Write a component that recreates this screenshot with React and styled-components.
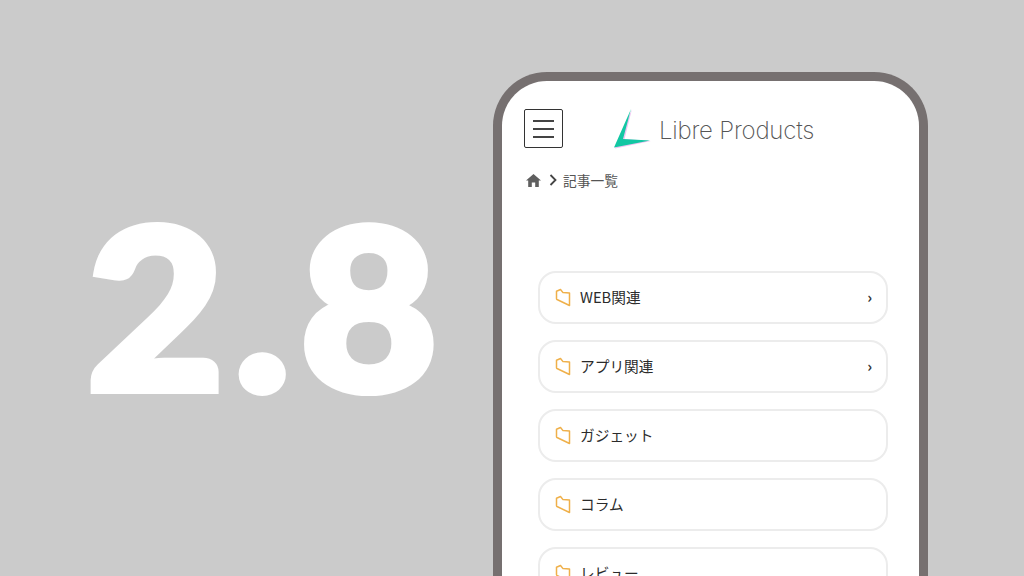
import React from "react";
import styled, { createGlobalStyle } from "styled-components";

const categories = [
  { name: "WEB関連", more: true },
  { name: "アプリ関連", more: true },
  { name: "ガジェット" },
  { name: "コラム" },
  { name: "レビュー" },
];

function FolderIcon() {
  return (
    <svg width="16" height="19" viewBox="0 0 16 19" fill="none" stroke="#efb04a" strokeWidth="1.5" strokeLinejoin="round">
      <path d="M1.5 3.2 L5.5 1.5 L8 4.6 L14.5 5 L14.5 17.5 L2 11.5 Q1.5 11.2 1.5 10.5 Z" />
    </svg>
  );
}

function HomeIcon() {
  return (
    <svg width="15" height="15" viewBox="0 0 15 15" fill="#5f5f5f">
      <path d="M7.5 1 L15 7.5 L12.8 7.5 L12.8 14 L9.2 14 L9.2 9.5 L5.8 9.5 L5.8 14 L2.2 14 L2.2 7.5 L0 7.5 Z" />
    </svg>
  );
}

function LogoMark() {
  return (
    <svg width="38" height="41" viewBox="0 0 38 41">
      <defs>
        <linearGradient id="markFade" x1="0" y1="1" x2="1" y2="0">
          <stop offset="0.55" stopColor="#12c7a3" />
          <stop offset="1" stopColor="#7fe3cf" />
        </linearGradient>
      </defs>
      <path d="M19 1 L11.5 31 L38 33 L2 40.5 Z" fill="#eec3f2" />
      <path d="M18 1 L10 31 L37 32.5 L1 39.5 Z" fill="url(#markFade)" />
    </svg>
  );
}

function App() {
  return (
    <>
      <GlobalStyle />
      <Stage>
        <VersionPane>
          <Version>2.8</Version>
        </VersionPane>
        <Phone>
          <Header>
            <MenuButton>
              <MenuLine />
              <MenuLine />
              <MenuLine />
            </MenuButton>
            <Logo>
              <LogoMark />
              <LogoText>Libre Products</LogoText>
            </Logo>
          </Header>
          <Breadcrumb>
            <HomeIcon />
            <Chevron width="8" height="12" viewBox="0 0 8 12" fill="none" stroke="#444" strokeWidth="1.8">
              <path d="M1.5 1 L6.5 6 L1.5 11" />
            </Chevron>
            <span>記事一覧</span>
          </Breadcrumb>
          <CategoryList>
            {categories.map((c) => (
              <Category key={c.name}>
                <FolderIcon />
                <CategoryName>{c.name}</CategoryName>
                {c.more && <More>›</More>}
              </Category>
            ))}
          </CategoryList>
        </Phone>
      </Stage>
    </>
  );
}

const GlobalStyle = createGlobalStyle`
  html, body {
    margin: 0;
    padding: 0;
    overflow: hidden;
  }
  body {
    font-family: "Noto Sans CJK JP", "Noto Sans", sans-serif;
  }
`;

const Stage = styled.div`
  display: flex;
  width: 1024px;
  height: 576px;
  overflow: hidden;
  background: #cbcbcb;
`;

const VersionPane = styled.div`
  display: flex;
  justify-content: center;
  align-items: center;
  box-sizing: border-box;
  width: 493px;
  height: 576px;
  padding: 32px 0 0 42px;
`;

const Version = styled.div`
  font-family: Lato, sans-serif;
  font-size: 224px;
  font-weight: 900;
  line-height: 1;
  letter-spacing: 9px;
  color: #fff;
  -webkit-text-stroke: 8px #fff;
  transform: scaleX(1.06);
`;

const Phone = styled.div`
  flex: none;
  box-sizing: border-box;
  width: 435px;
  height: 600px;
  margin-top: 72px;
  padding: 27px 31px 0 22px;
  background: #fff;
  border: 9px solid #767070;
  border-bottom: none;
  border-radius: 54px 54px 0 0;
`;

const Header = styled.div`
  display: flex;
  align-items: center;
  height: 41px;
`;

const MenuButton = styled.div`
  display: flex;
  flex-direction: column;
  justify-content: center;
  gap: 6px;
  box-sizing: border-box;
  width: 39px;
  height: 39px;
  padding: 0 8px;
  border: 1px solid #333;
  border-radius: 2px;
`;

const MenuLine = styled.div`
  height: 2px;
  background: #444;
`;

const Logo = styled.div`
  display: flex;
  align-items: center;
  gap: 8px;
  margin-left: 50px;
`;

const LogoText = styled.span`
  margin-top: 3px;
  font-family: Inter, sans-serif;
  font-size: 24px;
  font-weight: 200;
  letter-spacing: -0.2px;
  color: #555;
  white-space: nowrap;
`;

const Breadcrumb = styled.div`
  display: flex;
  align-items: center;
  height: 20px;
  margin-top: 21px;
  padding-left: 2px;
  font-size: 13.75px;
  color: #555;
`;

const Chevron = styled.svg`
  margin: 0 6px 0 8px;
`;

const CategoryList = styled.div`
  display: flex;
  flex-direction: column;
  gap: 16px;
  margin: 81px 0 0 14px;
`;

const Category = styled.div`
  display: flex;
  align-items: center;
  box-sizing: border-box;
  height: 53px;
  padding: 0 14px 0 15px;
  border: 2px solid #ececec;
  border-radius: 18px;
`;

const CategoryName = styled.span`
  flex: 1;
  margin: 0 0 2px 9px;
  font-size: 14.7px;
  color: #2b2b2b;
`;

const More = styled.span`
  margin-bottom: 2px;
  font-size: 15px;
  font-weight: 700;
  color: #333;
`;

export default App;
